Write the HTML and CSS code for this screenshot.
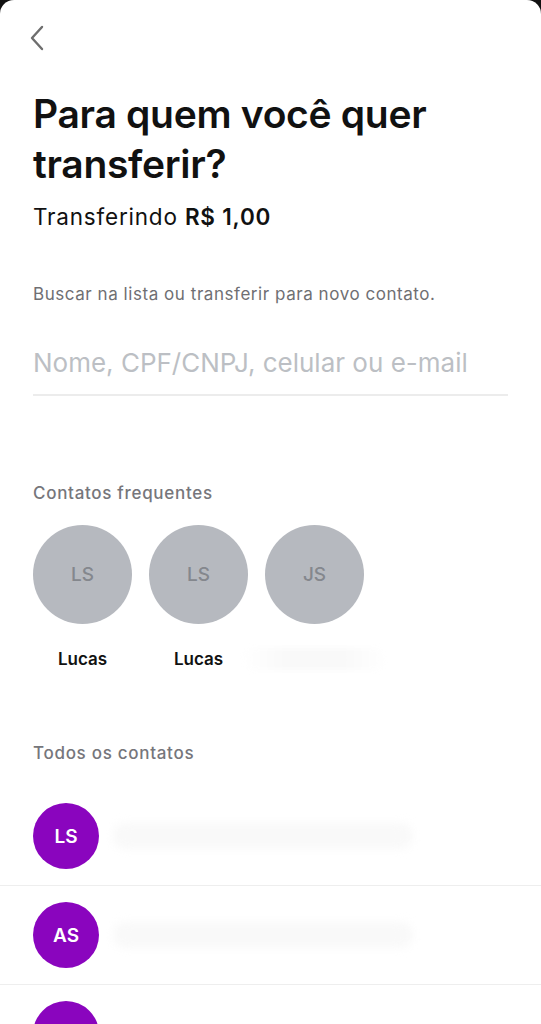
FILE: index.html
```html
<!DOCTYPE html>
<html lang="pt-BR">
<head>
    <meta charset="UTF-8">
    <meta name="viewport" content="width=device-width, initial-scale=1.0">
    <title>Transferir</title>
    <link rel="stylesheet" href="styles.css">
</head>
<body>
    <div class="page">
        <div class="screen">
            <button class="back" type="button" aria-label="Voltar">
                <svg width="18" height="26" viewBox="0 0 18 26">
                    <path d="M14 2 L4 13 L14 24" fill="none" stroke="#6e6e6e" stroke-width="2.4" stroke-linecap="round" stroke-linejoin="round"/>
                </svg>
            </button>

            <h1 class="title">Para quem você quer transferir?</h1>
            <p class="amount">Transferindo <strong>R$ 1,00</strong></p>

            <p class="hint">Buscar na lista ou transferir para novo contato.</p>
            <input class="search" type="text" placeholder="Nome, CPF/CNPJ, celular ou e-mail">

            <h2 class="section">Contatos frequentes</h2>
            <div class="frequent">
                <div class="contact">
                    <div class="bubble">LS</div>
                    <span class="name">Lucas</span>
                </div>
                <div class="contact">
                    <div class="bubble">LS</div>
                    <span class="name">Lucas</span>
                </div>
                <div class="contact">
                    <div class="bubble">JS</div>
                    <span class="name hidden-name"></span>
                </div>
            </div>

            <h2 class="section all">Todos os contatos</h2>
        </div>
        <ul class="list">
            <li class="row">
                <div class="avatar">LS</div>
                <span class="smudge"></span>
            </li>
            <li class="row">
                <div class="avatar">AS</div>
                <span class="smudge"></span>
            </li>
            <li class="row">
                <div class="avatar"></div>
            </li>
        </ul>
    </div>
</body>
</html>
```

FILE: styles.css
```css
body {
    margin: 0;
    background-color: #111111;
    font-family: Inter, "Noto Sans", sans-serif;
    height: 1024px;
    overflow: hidden;
}

.page {
    background-color: #ffffff;
    border-radius: 14px 14px 0 0;
    height: 1024px;
    overflow: hidden;
}

.screen {
    padding: 0 33px;
    display: flex;
    flex-direction: column;
}

.back {
    background: none;
    border: none;
    padding: 0;
    margin: 25px 0 0 -5px;
    width: 18px;
    height: 26px;
    cursor: pointer;
}

.title {
    margin: 38px 0 0;
    font-size: 39px;
    line-height: 50px;
    font-weight: 600;
    color: #111111;
    letter-spacing: -0.3px;
}

.amount {
    margin: 14px 0 0;
    font-size: 22.5px;
    line-height: 28px;
    color: #111111;
    letter-spacing: 0.8px;
}

.amount strong {
    font-weight: 600;
}

.hint {
    margin: 52px 0 0;
    font-size: 17px;
    line-height: 22px;
    color: #6f6f73;
    letter-spacing: 0.55px;
}

.search {
    margin: 36px 0 0;
    width: 100%;
    box-sizing: border-box;
    border: none;
    border-bottom: 2px solid #ececec;
    padding: 6px 0 16px;
    font-family: inherit;
    font-size: 26px;
    outline: none;
}

.search::placeholder {
    color: #bcbfc4;
}

.section {
    margin: 86px 0 0;
    font-size: 17px;
    line-height: 22px;
    font-weight: 500;
    color: #76767b;
    letter-spacing: 0.7px;
}

.frequent {
    display: flex;
    gap: 17px;
    margin-top: 21px;
}

.contact {
    display: flex;
    flex-direction: column;
    align-items: center;
    width: 99px;
}

.bubble {
    width: 99px;
    height: 99px;
    border-radius: 50%;
    background-color: #b6b9bf;
    color: #84878d;
    font-size: 19px;
    font-weight: 500;
    display: flex;
    align-items: center;
    justify-content: center;
}

.name {
    margin-top: 24px;
    font-size: 17px;
    line-height: 22px;
    font-weight: 600;
    color: #111111;
    height: 22px;
}

.hidden-name {
    width: 145px;
    flex-shrink: 0;
    border-radius: 11px;
    background: linear-gradient(90deg, #ffffff, #f9f9f9 30%, #f9f9f9 70%, #ffffff);
    filter: blur(3px);
}

.section.all {
    margin-top: 72px;
}

.list {
    list-style: none;
    margin: 23px 0 0;
    padding: 0;
}

.row {
    display: flex;
    align-items: center;
    gap: 14px;
    height: 82px;
    padding: 8px 33px;
    border-bottom: 1px solid #eeeeee;
}

.avatar {
    width: 66px;
    height: 66px;
    flex-shrink: 0;
    border-radius: 50%;
    background-color: #8a05be;
    color: #ffffff;
    font-size: 19px;
    font-weight: 600;
    display: flex;
    align-items: center;
    justify-content: center;
}

.smudge {
    width: 300px;
    height: 26px;
    border-radius: 13px;
    background-color: #f9f9f9;
    filter: blur(4px);
}
```
